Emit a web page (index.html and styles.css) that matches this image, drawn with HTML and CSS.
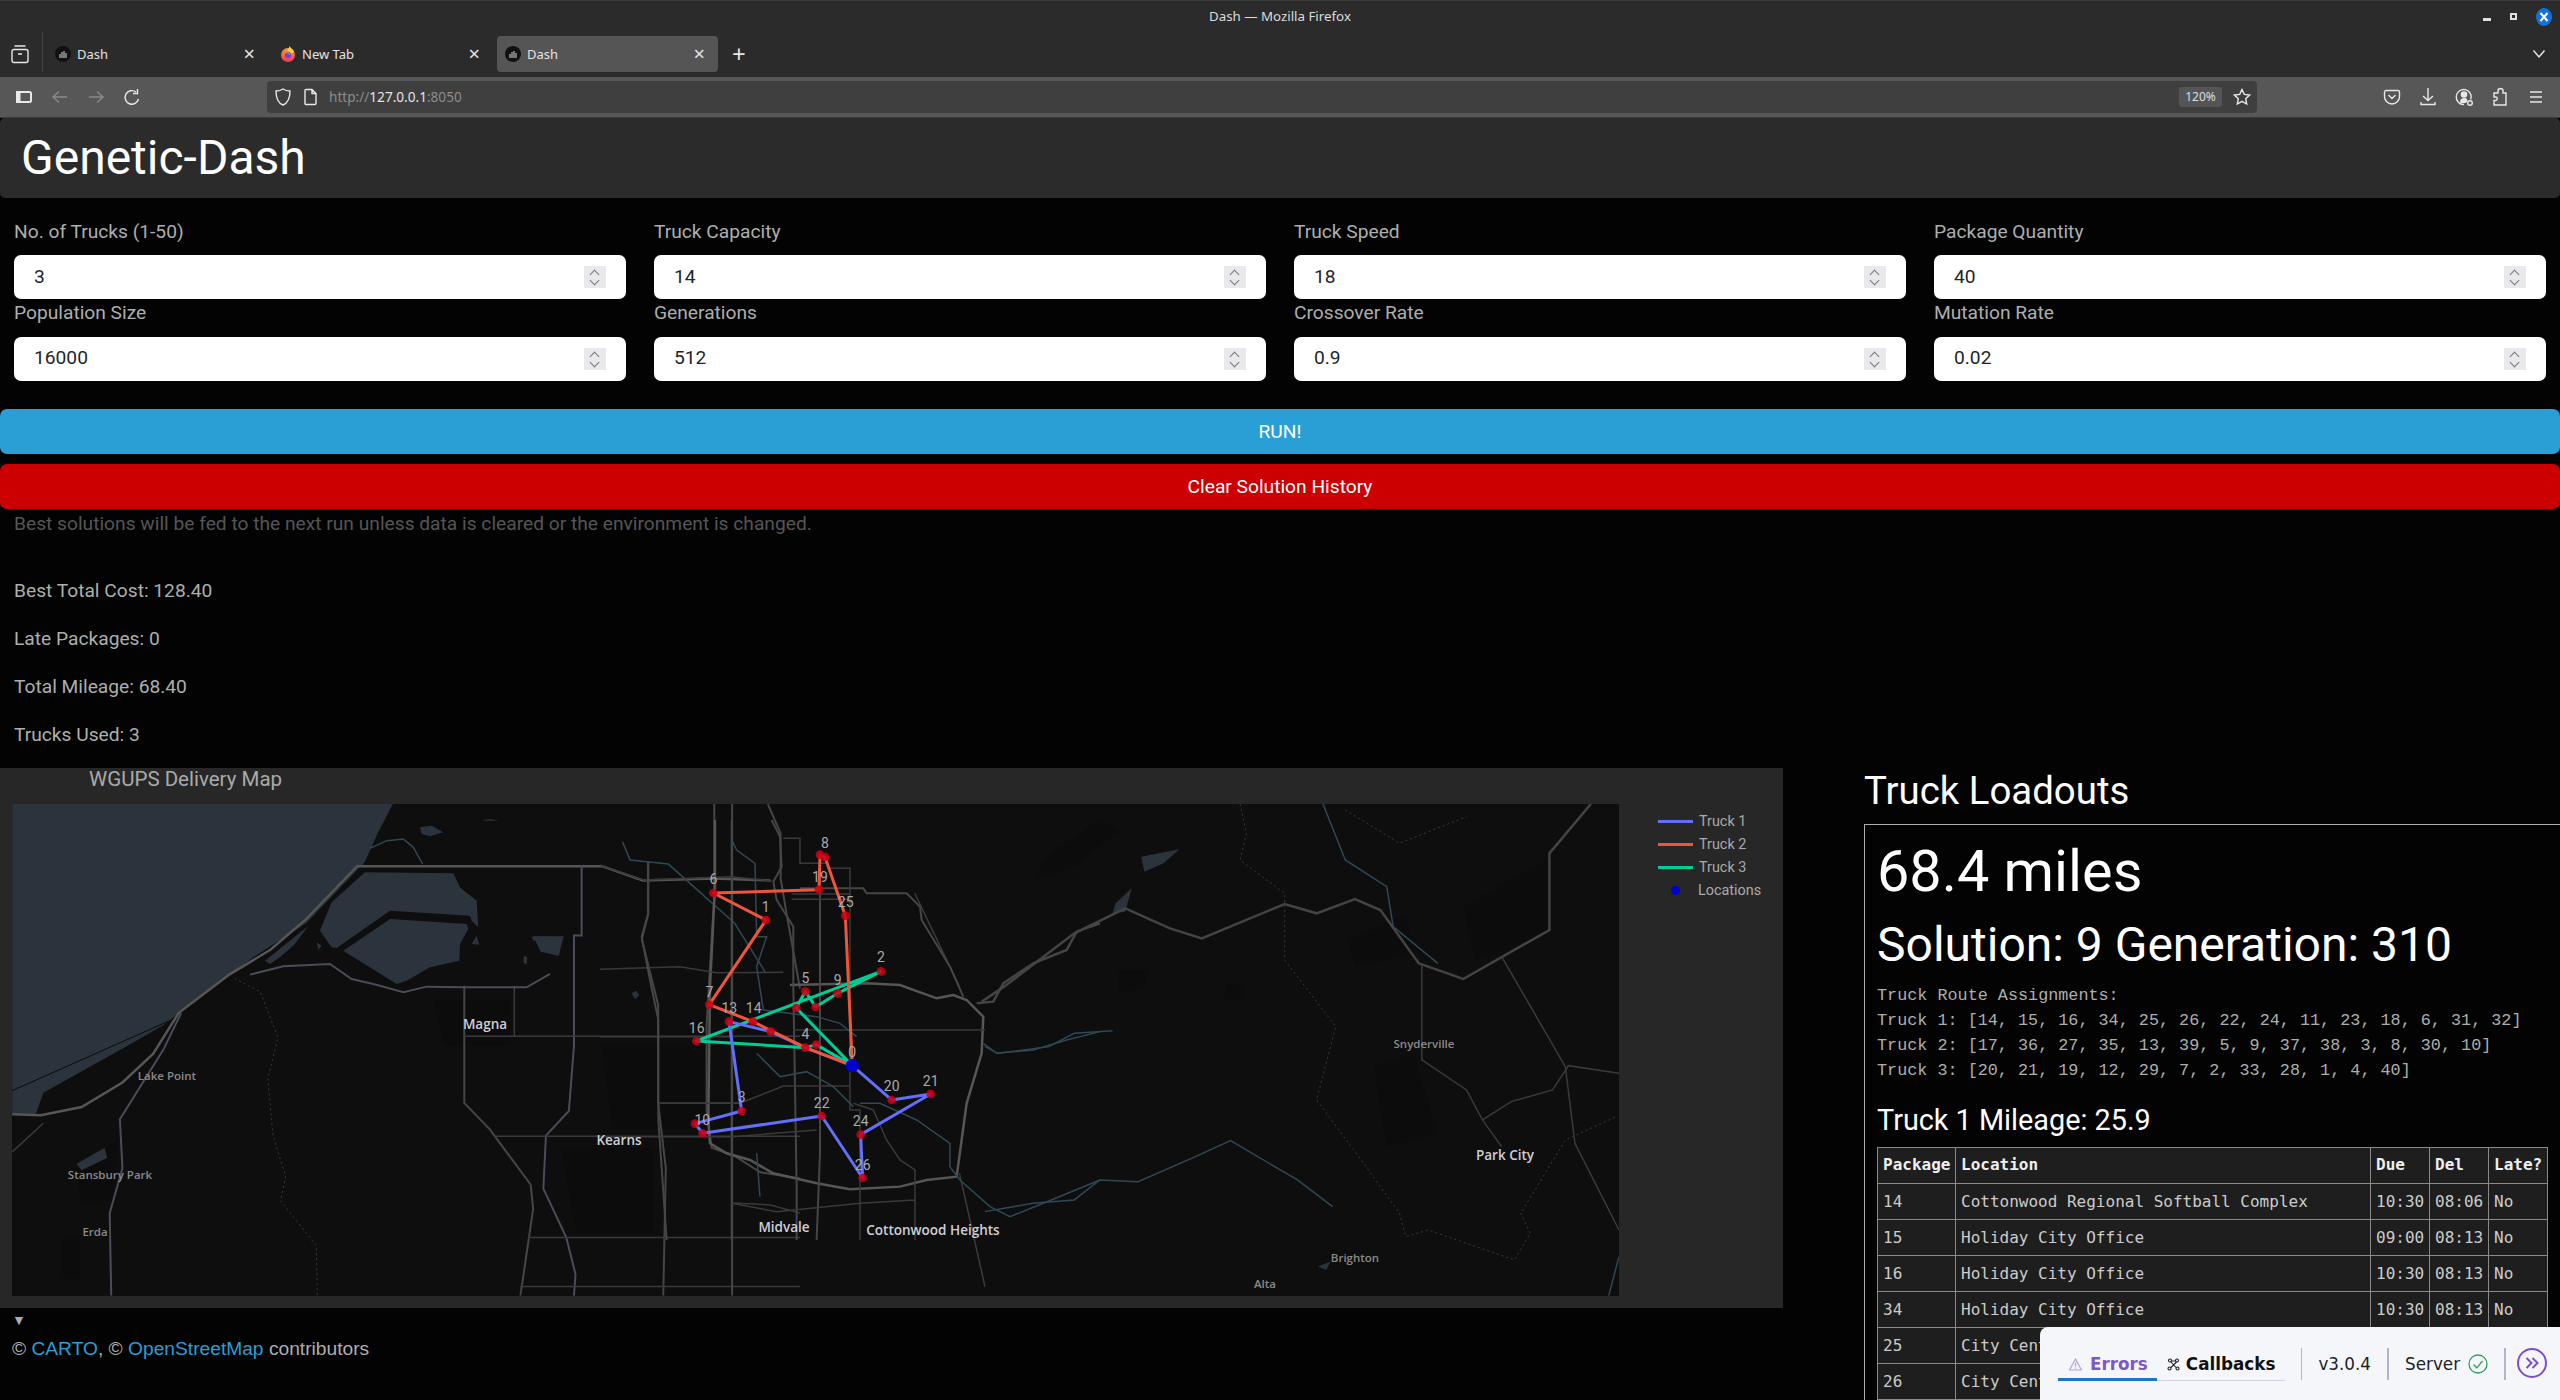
FILE: index.html
```html
<!DOCTYPE html>
<html>

<head>
    <meta charset="UTF-8">
    <title>Dash</title>
    <link rel="stylesheet" href="styles.css">
</head>

<body>
    <div class="titlebar">
        <span></span>
        <span class="titlebar-text">Dash — Mozilla Firefox</span>
        <div class="window-controls">
            <span class="win-min"></span>
            <span class="win-max"></span>
            <span class="win-close">
                <svg width="10" height="10" viewBox="0 0 10 10"><path d="M1.500 1 8.500 9M8.500 1 1.500 9" stroke="#fff" stroke-width="2" fill="none" /></svg>
            </span>
        </div>
    </div>

    <div class="tabstrip">
        <div class="tabs-button">
            <svg width="18" height="20" viewBox="0 0 18 20" class="ico"><path d="M3.500 2h11M3 5.500h12a2 2 0 0 1 2 2v9a2 2 0 0 1-2 2H3a2 2 0 0 1-2-2v-9a2 2 0 0 1 2-2ZM7 10h4" /></svg>
        </div>
        <div class="tab">
            <svg class="favicon" viewBox="0 0 16 16"><circle cx="8" cy="8" r="8" fill="#111" /><path d="M5 8v4M7 6v6M9 5v7M11 7v5" stroke="#bbb" stroke-width="1.200" /></svg>
            <span class="tab-label">Dash</span>
            <span class="tab-close">×</span>
        </div>
        <div class="tab">
            <svg class="favicon" viewBox="0 0 16 16">
                <defs><linearGradient id="fox" x1="0" y1="0" x2="0" y2="1"><stop offset="0" stop-color="#ff9a1f" /><stop offset="1" stop-color="#f0356b" /></linearGradient></defs>
                <circle cx="8" cy="9" r="7" fill="url(#fox)" /><path d="M7 5C8 4 9 2 9.500 0c.5 2 4 3 4.500 6L11 8C10 6 9 5 7 5Z" fill="#ffd23f" /><circle cx="8" cy="9" r="3" fill="#6a3fd8" /><path d="M5 7c2-1 4 0 5 2" stroke="#ff9a1f" fill="none" />
            </svg>
            <span class="tab-label">New Tab</span>
            <span class="tab-close">×</span>
        </div>
        <div class="tab tab-active">
            <svg class="favicon" viewBox="0 0 16 16"><circle cx="8" cy="8" r="8" fill="#111" /><path d="M5 8v4M7 6v6M9 5v7M11 7v5" stroke="#bbb" stroke-width="1.200" /></svg>
            <span class="tab-label">Dash</span>
            <span class="tab-close">×</span>
        </div>
        <span class="tab-new">+</span>
        <span class="tab-list">
            <svg width="14" height="10" viewBox="0 0 14 10" class="ico"><path d="M1.500 1.500 7 8l5.500-6.500" /></svg>
        </span>
    </div>

    <div class="toolbar">
        <div class="nav-buttons">
            <svg width="18" height="18" viewBox="0 0 18 18" class="ico-bold"><rect x="2" y="4" width="14" height="10" rx="1.500" /><rect x="2" y="4" width="2.500" height="10" fill="#e8e8e8" /></svg>
            <svg width="18" height="18" viewBox="0 0 18 18" class="ico ico-dim"><path d="M16 9H2M8 3.500 2 9l6 5.500" /></svg>
            <svg width="18" height="18" viewBox="0 0 18 18" class="ico ico-dim"><path d="M2 9h14M10 3.500 16 9l-6 5.500" /></svg>
            <svg width="18" height="18" viewBox="0 0 18 18" class="ico"><path d="M15.500 11A6.800 6.800 0 1 1 13 4M14.500 1v4.500H10" /></svg>
        </div>
        <div class="urlbar">
            <svg width="18" height="20" viewBox="0 0 18 20" class="ico"><path d="M9 2c2 1.500 4 2 7 2 0 7-2 12-7 14C4 16 2 11 2 4c3 0 5-.5 7-2Z" /></svg>
            <svg width="16" height="20" viewBox="0 0 16 20" class="ico"><path d="M3 2.500h6l4 4v10a1 1 0 0 1-1 1H3a1 1 0 0 1-1-1v-13a1 1 0 0 1 1-1ZM9 2.500v4h4" /></svg>
            <span class="url-text">http://<b>127.0.0.1</b>:8050</span>
            <span class="url-zoom">120%</span>
            <svg width="18" height="18" viewBox="0 0 18 18" class="ico"><path d="m9 1.500 2.300 4.900 5.200.7-3.800 3.600 1 5.300L9 13.400 4.300 16l1-5.300L1.500 7.100l5.200-.7Z" /></svg>
        </div>
        <div class="toolbar-right">
            <svg width="18" height="18" viewBox="0 0 18 18" class="ico"><path d="M3 2.500h12a1.500 1.500 0 0 1 1.500 1.500v4.500a7.500 7.500 0 0 1-15 0V4A1.500 1.500 0 0 1 3 2.500ZM5.500 7 9 10.500 12.500 7" /></svg>
            <svg width="18" height="20" viewBox="0 0 18 20" class="ico"><path d="M9 1v12.500M4 9 9 13.500 14 9M2 15v2.500h14V15" /></svg>
            <svg width="18" height="20" viewBox="0 0 18 20" class="ico"><path d="M15.800 12.500A7.500 7.500 0 1 0 9 17.500" /><circle cx="9" cy="7.500" r="2.600" fill="#e8e8e8" /><path d="M5 15c0-3 2-4 4-4s3 .5 3.500 2.500L11 16H6Z" fill="#e8e8e8" stroke="none" /><circle cx="15" cy="16" r="2.300" /></svg>
            <svg width="18" height="20" viewBox="0 0 18 20" class="ico"><path d="M7 6V4a2.500 2.500 0 0 1 5 0v2h3v12H3v-4.500h1.500a1.700 1.700 0 0 0 0-3.500H3V6Z" /></svg>
            <svg width="18" height="18" viewBox="0 0 18 18" class="ico"><path d="M3 4h12M3 9h12M3 14h12" /></svg>
        </div>
    </div>

    <header class="app-header">
        <h1>Genetic-Dash</h1>
    </header>

    <main>
        <form class="params">
            <div class="param"><label>No. of Trucks (1-50)</label><div class="num-input"><span>3</span><i class="spinner"></i></div></div>
            <div class="param"><label>Truck Capacity</label><div class="num-input"><span>14</span><i class="spinner"></i></div></div>
            <div class="param"><label>Truck Speed</label><div class="num-input"><span>18</span><i class="spinner"></i></div></div>
            <div class="param"><label>Package Quantity</label><div class="num-input"><span>40</span><i class="spinner"></i></div></div>
            <div class="param"><label>Population Size</label><div class="num-input"><span>16000</span><i class="spinner"></i></div></div>
            <div class="param"><label>Generations</label><div class="num-input"><span>512</span><i class="spinner"></i></div></div>
            <div class="param"><label>Crossover Rate</label><div class="num-input"><span>0.9</span><i class="spinner"></i></div></div>
            <div class="param"><label>Mutation Rate</label><div class="num-input"><span>0.02</span><i class="spinner"></i></div></div>
        </form>

        <button class="btn btn-run" type="button">RUN!</button>
        <button class="btn btn-clear" type="button">Clear Solution History</button>
        <p class="note">Best solutions will be fed to the next run unless data is cleared or the environment is changed.</p>

        <div class="stats">
            <p>Best Total Cost: 128.40</p>
            <p>Late Packages: 0</p>
            <p>Total Mileage: 68.40</p>
            <p>Trucks Used: 3</p>
        </div>

        <div class="results">
            <section class="map-col">
                <div class="map-figure">
                    <div class="map-title">WGUPS Delivery Map</div>
                    <div class="map-body">
                        <svg class="map" width="1607" height="492" viewBox="12 804 1607 492">
                            <rect x="12" y="804" width="1607" height="492" fill="#0e0e0f" />

                            <!-- west side, coords read from left crop -->
                            <g transform="translate(0,760) scale(.5102,.4082)">
                                <path class="blotch" d="M850 590H1000V700H870ZM1180 700H1380V900H1200ZM120 1170H155V1270H120ZM150 1000 230 930 220 1080 160 1090ZM1100 950H1280V1160H1130Z" />
                                <path class="water" d="M24 108H770L740 180 715 250 600 400 500 480 360 610 320 650 250 700 85 815 70 868H24Z" />
                                <path class="line-dark" d="M24 810 330 640" />
                                <path class="road-major" d="M24 868 80 870 160 850 240 790 300 720 350 620 450 525 530 465 600 390 700 260H1180L1260 295 1400 290 1510 295" />
                                <path class="road-blue" d="M1140 258V430H1125V700L1115 860 1070 920 1065 1050 1110 1170 1128 1260 1125 1312" />
                                <path class="road-blue" d="M355 620 320 710 235 880 240 1000 215 1110 218 1312" />
                                <path class="road" d="M1270 250V380L1258 440 1290 600V840L1305 1000 1300 1312" />
                                <path class="road" d="M910 553V840L960 905 1040 1040 1045 1100 1020 1312" />
                                <path class="road-thin" d="M1008 553V677M910 677H1568M970 922H1568M24 960 85 890M1035 1170H1568M1020 1290H1568M1290 840H1450M1435 1085 1510 1090 1568 1110" />
                                <path class="road" d="M1400 108V330L1385 650V860L1395 950 1440 970 1490 1010 1568 1025M1435 108V1312M1505 108 1530 180V290L1545 400 1568 560" />
                                <path class="river" d="M1220 200 1235 245 1310 255 1440 400 1500 520" />
                                <path class="trail" d="M460 535 510 568 545 680 525 780 535 920 560 1020 550 1080 620 1190 622 1312" />
                                <path class="water" d="M1045 432H1105L1095 480 1060 470Z" />
                                <path class="water" d="M150 990 205 950 210 975 160 1005Z" />
                            </g>

                            <!-- salt ponds by the lake, from closer crop -->
                            <g transform="translate(250,804) scale(.3333)">
                                <path class="water" d="M345 205 610 208 630 250 680 290 685 370 665 350 660 335 420 320 260 432 245 430 210 380 245 295Z" />
                                <path class="water" d="M420 345 650 360 655 375 630 420 628 470 540 490 470 530 440 540 280 440Z" />
                                <path class="water" d="M200 415 215 425 205 438ZM665 420 680 395 688 422ZM45 470 120 410 175 365 135 420 90 460 60 480ZM510 70 545 65 580 85 540 97 515 90ZM845 398H900V410H850ZM822 455 832 460 830 482 820 475ZM695 50 745 50 720 45Z" />
                                <path class="river" d="M360 133 410 110 460 105 490 130 518 180" />
                                <path class="road-blue" d="M0 512 100 487 240 480 305 525 370 540 460 565 530 548 640 550H830L900 510" />
                            </g>

                            <!-- east side -->
                            <g transform="translate(800,800) scale(.6378,.3333)">
                                <path class="blotch" d="M380 180 470 60 500 90 430 200 370 240ZM500 510 545 510 540 560 500 580ZM670 550H695V600H665ZM900 800 960 760 1000 1000 920 1040ZM1040 320 1170 180 1170 400 1060 480ZM860 420 950 350 960 460 870 500Z" />
                                <path class="water" d="M535 170 595 148 570 190 540 215ZM495 310 520 265 510 335 490 340ZM812 1400 832 1385 825 1410Z" />
                                <path class="river" d="M820 12 830 60 855 180 920 260 930 380 1000 490M290 1235 365 1210 430 1200 470 1140 530 1145 620 1070 675 1022 780 1140 835 1220M290 740 310 760 390 740 430 700 490 692M1268 1487 1284 1370" />
                                <path class="road-east" d="M285 605 320 560 430 400 510 325 580 385 630 415 760 312 810 340 870 297 910 330 970 490 1040 537 1175 390V160L1240 12" />
                                <path class="road-thin" d="M975 495V780L1045 870 1070 960 1100 1040M1100 470 1200 800 1215 1030 1284 1290" />
                                <path class="road-thin" d="M1070 960 1115 905 1180 870 1205 797 1284 820" />
                                <path class="road-thin" d="M250 1120 290 1460M180 280 250 560" />
                                <path class="trail" d="M690 12 700 100 690 180 760 280V480L840 680 810 900 880 1080 940 1240 950 1310 985 1290 1120 1380 1145 1300 1130 1240 1200 1020 1280 950M855 30 940 130 1045 50" />
                            </g>

                            <!-- valley, roads and the truck routes -->
                            <g transform="translate(600,820) scale(.3333)">
                                <path class="road-major" d="M345 0V200L330 500 325 900 330 970 380 1000 450 1020 520 1060 650 1090 750 1108 900 1100 980 1080 1070 1070 1100 850 1145 700 1150 590 1100 540 1060 525 1010 535 900 495 800 490 570 495" />
                                <path class="road" d="M395 0V1260M515 0 540 50 545 140 520 185 530 240 580 320V500L585 800 590 1100V1260M660 130V1000L650 1260M600 205H790L800 220H920L960 260 965 300 1050 440 1090 530" />
                                <path class="road-thin" d="M550 55H600V130H680M690 145H750V870H780V1260M575 222H750M575 238H750M0 135 130 180 390 170 515 182M0 448 240 440 350 458 550 457M0 650H400M580 630H1155M175 850H420L550 798H750M0 950H400L650 930M395 1150 530 1175 780 1150 945 1140M760 850 820 870 860 960 900 1020 945 1050V1260" />
                                <path class="road" d="M145 125V280L125 350 150 480 175 600V900L200 1260" />
                                <path class="road-east" d="M1500 310 1430 335 1400 390 1300 430 1210 490 1180 545 1130 550" />
                                <path class="river" d="M1150 670 1190 700 1300 690 1400 660 1500 635M780 850 840 850 950 900 1050 970V1040L1080 1080 1170 1160 1230 1190 1330 1150 1500 1080M540 770 620 755 700 800 760 860M395 60 410 90 465 130 470 350 500 350 470 440 490 570 650 590 720 610 770 650M470 700 540 770M470 1000 480 1130" />
                                <path class="water" d="M95 520 108 512 118 525 105 538Z" />

                                <path class="route route-green" d="M757 737 589 564 616 514 647 561 713 520 843 454 289 663 616 683 649 674 757 737" />
                                <path class="route route-blue" d="M757 737 875 840 992 822 782 944 788 1074 665 888 308 940 285 911 425 873 387 605 512 635 616 683 757 737" />
                                <path class="route route-red" d="M757 737 736 287 675 111 660 104 657 209 340 219 498 300 328 554 459 605 616 683 757 737" />

                                <g class="nodes">
                                    <circle cx="660" cy="104" r="13" /><circle cx="675" cy="111" r="13" /><circle cx="657" cy="209" r="13" />
                                    <circle cx="736" cy="287" r="13" /><circle cx="340" cy="219" r="13" /><circle cx="498" cy="300" r="13" />
                                    <circle cx="843" cy="454" r="13" /><circle cx="616" cy="514" r="13" /><circle cx="713" cy="520" r="13" />
                                    <circle cx="647" cy="561" r="13" /><circle cx="589" cy="564" r="13" /><circle cx="328" cy="554" r="13" />
                                    <circle cx="387" cy="605" r="13" /><circle cx="459" cy="605" r="13" /><circle cx="512" cy="635" r="13" />
                                    <circle cx="289" cy="663" r="13" /><circle cx="616" cy="683" r="13" /><circle cx="649" cy="674" r="13" />
                                    <circle cx="875" cy="840" r="13" /><circle cx="992" cy="822" r="13" /><circle cx="425" cy="873" r="13" />
                                    <circle cx="665" cy="888" r="13" /><circle cx="285" cy="911" r="13" /><circle cx="308" cy="940" r="13" />
                                    <circle cx="782" cy="944" r="13" /><circle cx="788" cy="1074" r="13" />
                                </g>
                                <circle class="depot" cx="757" cy="737" r="20" />

                                <g class="node-labels">
                                    <text x="675" y="70">8</text><text x="660" y="170">19</text><text x="737" y="247">25</text>
                                    <text x="340" y="178">6</text><text x="497" y="262">1</text><text x="843" y="412">2</text>
                                    <text x="616" y="475">5</text><text x="713" y="480">9</text><text x="328" y="515">7</text>
                                    <text x="388" y="563">13</text><text x="461" y="565">14</text><text x="290" y="623">16</text>
                                    <text x="616" y="642">4</text><text x="757" y="697">0</text><text x="875" y="798">20</text>
                                    <text x="992" y="782">21</text><text x="425" y="832">3</text><text x="665" y="848">22</text>
                                    <text x="307" y="900">10</text><text x="782" y="904">24</text><text x="788" y="1035">26</text>
                                </g>
                            </g>

                            <g class="place-labels">
                                <text x="485" y="1024">Magna</text>
                                <text class="minor" x="167" y="1075">Lake Point</text>
                                <text class="minor" x="110" y="1174">Stansbury Park</text>
                                <text class="minor" x="95" y="1231">Erda</text>
                                <text x="619" y="1140">Kearns</text>
                                <text x="784" y="1227">Midvale</text>
                                <text x="933" y="1230">Cottonwood Heights</text>
                                <text class="minor" x="1424" y="1043">Snyderville</text>
                                <text x="1505" y="1155">Park City</text>
                                <text class="minor" x="1355" y="1257">Brighton</text>
                                <text class="minor" x="1265" y="1283">Alta</text>
                            </g>
                        </svg>
                        <ul class="legend">
                            <li><i class="swatch swatch-blue"></i>Truck 1</li>
                            <li><i class="swatch swatch-red"></i>Truck 2</li>
                            <li><i class="swatch swatch-green"></i>Truck 3</li>
                            <li><i class="swatch-dot"></i>Locations</li>
                        </ul>
                    </div>
                </div>
                <div class="attribution-toggle">▼</div>
                <div class="attribution">© <a>CARTO</a>, © <a>OpenStreetMap</a> contributors</div>
            </section>

            <section class="loadouts">
                <h2>Truck Loadouts</h2>
                <div class="loadouts-box">
                    <h1>68.4 miles</h1>
                    <h2 class="solution">Solution: 9 Generation: 310</h2>
                    <pre>Truck Route Assignments:
Truck 1: [14, 15, 16, 34, 25, 26, 22, 24, 11, 23, 18, 6, 31, 32]
Truck 2: [17, 36, 27, 35, 13, 39, 5, 9, 37, 38, 3, 8, 30, 10]
Truck 3: [20, 21, 19, 12, 29, 7, 2, 33, 28, 1, 4, 40]</pre>
                    <h4>Truck 1 Mileage: 25.9</h4>
                    <table>
                        <colgroup><col class="c-pkg"><col class="c-loc"><col class="c-due"><col class="c-del"><col class="c-late"></colgroup>
                        <tr><th>Package</th><th>Location</th><th>Due</th><th>Del</th><th>Late?</th></tr>
                        <tr><td>14</td><td>Cottonwood Regional Softball Complex</td><td>10:30</td><td>08:06</td><td>No</td></tr>
                        <tr><td>15</td><td>Holiday City Office</td><td>09:00</td><td>08:13</td><td>No</td></tr>
                        <tr><td>16</td><td>Holiday City Office</td><td>10:30</td><td>08:13</td><td>No</td></tr>
                        <tr><td>34</td><td>Holiday City Office</td><td>10:30</td><td>08:13</td><td>No</td></tr>
                        <tr><td>25</td><td>City Center</td><td></td><td></td><td></td></tr>
                        <tr><td>26</td><td>City Center</td><td></td><td></td><td></td></tr>
                    </table>
                </div>
            </section>
        </div>
    </main>

    <div class="debug-panel">
        <div class="debug-tabs">
            <span class="debug-tab debug-tab-active">
                <svg width="13" height="13" viewBox="0 0 13 13" fill="none" stroke="#b79fe3" stroke-width="1.200"><path d="M6.500 1 12.500 12H.5ZM6.500 4.500v4M6.500 9.500v1.200" /></svg>
                Errors
            </span>
            <span class="debug-tab">
                <svg width="13" height="13" viewBox="0 0 13 13" fill="none" stroke="#222" stroke-width="1.100"><circle cx="3" cy="2.500" r="1.500" /><circle cx="10" cy="2.500" r="1.500" /><circle cx="2.500" cy="10.500" r="1.500" /><circle cx="10.500" cy="10.500" r="1.500" /><path d="M4.500 3h4M4 4l5 5.500M9.500 4 4 9.500" /></svg>
                Callbacks
            </span>
        </div>
        <span class="debug-item debug-version">v3.0.4</span>
        <span class="debug-item debug-server">Server
            <svg width="20" height="20" viewBox="0 0 20 20" fill="none" stroke="#2f9e5a" stroke-width="1.300"><circle cx="10" cy="10" r="9" /><path d="M5.500 10.500 8.800 13.800 14.500 7" /></svg>
        </span>
        <span class="debug-toggle">
            <svg width="30" height="30" viewBox="0 0 30 30" fill="none" stroke="#7a4fc9" stroke-width="2"><circle cx="15" cy="15" r="14" /><path d="M9.500 10 14.500 15 9.500 20M15.500 10 20.500 15 15.500 20" /></svg>
        </span>
    </div>
</body>

</html>
```

FILE: styles.css
```css
* {
    box-sizing: border-box;
}

html,
body {
    height: 1400px;
    overflow: hidden;
}

body {
    margin: 0;
    background-color: #030303;
    color: #adafae;
    font-family: Roboto, sans-serif;
    font-size: 19.2px;
    line-height: 28.8px;
}

h1,
h2,
h4,
p,
pre {
    margin: 0;
    font-weight: 400;
}

/* browser chrome */
.titlebar {
    height: 36px;
    padding-bottom: 4px;
    display: grid;
    grid-template-columns: 1fr auto 1fr;
    align-items: center;
    background-color: #2b2b2b;
    border-top: 1px solid #3a3a3a;
    color: #dcdcdc;
    font-family: "Noto Sans", sans-serif;
    font-size: 13.3px;
}

.window-controls {
    display: flex;
    justify-content: flex-end;
    align-items: center;
    gap: 19px;
    padding-right: 8px;
}

.win-min {
    width: 8px;
    height: 3px;
    margin-top: 6px;
    background-color: #e0e0e0;
}

.win-max {
    width: 7px;
    height: 7px;
    border: 2px solid #e0e0e0;
}

.win-close {
    width: 16px;
    height: 18px;
    display: flex;
    align-items: center;
    justify-content: center;
    border-radius: 50%;
    background-color: #1272d8;
}

.tabstrip {
    height: 41px;
    display: flex;
    align-items: flex-start;
    background-color: #2b2b2b;
    color: #e4e4e4;
    font-family: "Noto Sans", sans-serif;
    font-size: 13px;
}

.tabs-button {
    width: 43px;
    height: 40px;
    margin-top: -4px;
    padding: 12px 0 0 11px;
    border-right: 1px solid #444;
}

.tab {
    width: 221px;
    height: 36px;
    margin-left: 4px;
    padding: 0 8px;
    display: flex;
    align-items: center;
    border-radius: 4px;
}

.tab-active {
    background-color: #555;
}

.favicon {
    width: 16px;
    height: 16px;
    margin-right: 6px;
}

.tab-label {
    flex: 1;
}

.tab-close {
    font-size: 20px;
    margin-right: 5px;
}

.tab-new {
    margin-left: 14px;
    font-size: 24px;
    line-height: 36px;
}

.tab-list {
    margin-left: auto;
    padding: 13px 14px 0 0;
    line-height: 10px;
}

.ico {
    fill: none;
    stroke: #e8e8e8;
    stroke-width: 1.4;
}

.ico-dim {
    stroke: #8a8a8a;
}

.ico-bold {
    fill: none;
    stroke: #e8e8e8;
    stroke-width: 2;
}

.toolbar {
    height: 41px;
    display: flex;
    align-items: center;
    background-color: #575757;
    border-bottom: 1px solid #3a3a3a;
}

.nav-buttons {
    width: 267px;
    padding-left: 15px;
    display: flex;
    gap: 18px;
}

.urlbar {
    width: 1990px;
    height: 32px;
    padding: 0 6px 0 7px;
    display: flex;
    align-items: center;
    background-color: #3f3f3f;
    border-radius: 4px;
    font-family: "Noto Sans", sans-serif;
    font-size: 13.6px;
    line-height: 20px;
}

.urlbar .ico:nth-child(2) {
    margin-left: 11px;
}

.url-text {
    margin-left: 10px;
    flex: 1;
    color: #8c8c8c;
}

.url-text b {
    color: #e4e4e4;
    font-weight: 400;
}

.url-zoom {
    width: 43px;
    height: 20px;
    margin-right: 11px;
    text-align: center;
    border-radius: 3px;
    background-color: #555;
    color: #ddd;
    font-size: 12px;
}

.toolbar-right {
    margin-left: 126px;
    display: flex;
    align-items: center;
    gap: 18px;
}

/* page */
.app-header {
    height: 80px;
    padding: 0 21px;
    display: flex;
    align-items: center;
    background-color: #2b2b2b;
    border-radius: 5px;
}

.app-header h1 {
    color: #fff;
    font-size: 48px;
    line-height: 57.6px;
}

.params {
    margin-top: 20px;
    padding: 0 14px;
    display: grid;
    grid-template-columns: repeat(4, 1fr);
    column-gap: 28px;
}

.param label {
    display: block;
    margin-bottom: 8.5px;
}

.num-input {
    height: 44px;
    padding: 0 20px;
    display: flex;
    align-items: center;
    justify-content: space-between;
    background-color: #fff;
    border-radius: 7px;
    color: #212529;
}

.spinner {
    width: 22px;
    height: 22px;
    background-color: #e9e9ed;
    position: relative;
}

.spinner::before,
.spinner::after {
    content: "";
    position: absolute;
    left: 7px;
    width: 6px;
    height: 6px;
    border-left: 1px solid #777;
    border-top: 1px solid #777;
    transform: rotate(45deg);
}

.spinner::before {
    top: 5px;
}

.spinner::after {
    top: 11px;
    transform: rotate(225deg);
}

.btn {
    display: block;
    width: 100%;
    height: 45px;
    border: none;
    border-radius: 7px;
    color: #fff;
    font-family: Roboto, sans-serif;
    font-size: 19.2px;
}

.btn-run {
    margin-top: 28.4px;
    background-color: #2a9fd6;
}

.btn-clear {
    margin-top: 10px;
    background-color: #cc0000;
}

.note {
    padding: 1px 0 0 14px;
    color: #555;
}

.stats {
    margin-top: 38px;
    padding-left: 14px;
}

.stats p {
    margin-bottom: 19.2px;
}

.stats p:last-child {
    margin-bottom: 18.6px;
}

.results {
    display: grid;
    grid-template-columns: 1783px 1fr;
    column-gap: 81px;
}

/* map */
.map-figure {
    height: 540px;
    background-color: #272727;
}

.map-title {
    height: 36px;
    padding-left: 89px;
    color: #aaa;
    font-size: 20.5px;
    line-height: 22px;
}

.map-body {
    display: flex;
    padding-left: 12px;
}

.map path {
    fill: none;
    vector-effect: non-scaling-stroke;
}

.map .water {
    fill: #2b343d;
}

.map .blotch {
    fill: #0c0c0d;
}

.line-dark {
    stroke: #0b0b0b;
    stroke-width: 1;
}

.road-major {
    stroke: #565654;
    stroke-width: 2.5;
}

.road-east {
    stroke: #444;
    stroke-width: 2.5;
}

.road {
    stroke: #464648;
    stroke-width: 2;
}

.road-blue {
    stroke: #4a4c58;
    stroke-width: 2;
}

.road-thin {
    stroke: #3a3a3c;
    stroke-width: 1.5;
}

.river {
    stroke: #2f4856;
    stroke-width: 1.5;
}

.trail {
    stroke: #3a3a3a;
    stroke-width: 1;
    stroke-dasharray: 2 3;
}

.route {
    stroke-width: 3;
    stroke-linejoin: round;
}

.route-blue {
    stroke: #636efa;
}

.route-red {
    stroke: #ef553b;
}

.route-green {
    stroke: #00cc96;
}

.nodes {
    fill: #cc0014;
    opacity: 0.85;
}

.depot {
    fill: #0000cc;
}

.node-labels {
    fill: #aaa;
    font-size: 42px;
    text-anchor: middle;
    dominant-baseline: central;
}

.place-labels {
    fill: #cfcfd6;
    font-family: "Open Sans", sans-serif;
    font-size: 13.5px;
    font-weight: 600;
    text-anchor: middle;
    dominant-baseline: central;
}

.place-labels .minor {
    fill: #8a8a8a;
    font-size: 11.5px;
}

.legend {
    margin: 6px 0 0 39px;
    padding: 0;
    list-style: none;
    font-size: 14.4px;
    line-height: 23px;
    color: #aaa;
}

.legend li {
    display: flex;
    align-items: center;
}

.swatch {
    width: 35px;
    height: 3px;
    margin-right: 6px;
}

.swatch-blue {
    background-color: #636efa;
}

.swatch-red {
    background-color: #ef553b;
}

.swatch-green {
    background-color: #00cc96;
}

.swatch-dot {
    width: 9px;
    height: 9px;
    margin: 0 18px 0 13px;
    border-radius: 50%;
    background-color: #0000cc;
}

.attribution-toggle {
    padding-left: 12px;
    height: 24px;
    font-size: 14px;
    line-height: 24px;
}

.attribution {
    padding-left: 12px;
    margin-top: 3px;
    font-family: "Liberation Sans", sans-serif;
}

.attribution a {
    color: #2a9fd6;
}

/* right column */
.loadouts h2 {
    color: #fff;
    font-size: 38.4px;
    line-height: 46.08px;
    margin-bottom: 9.6px;
}

.loadouts-box {
    border: 1px solid #adafae;
    border-right: none;
    padding: 12px 0 0 12px;
    height: 600px;
}

.loadouts-box h1 {
    color: #fff;
    font-size: 57.6px;
    line-height: 69.12px;
    margin-bottom: 9.6px;
}

.loadouts-box .solution {
    font-size: 48px;
    line-height: 57.6px;
}

.loadouts-box pre {
    font-family: "Liberation Mono", monospace;
    font-size: 16.8px;
    line-height: 25.2px;
    margin-bottom: 19.2px;
}

.loadouts-box h4 {
    color: #fff;
    font-size: 28.8px;
    line-height: 34.56px;
    margin-bottom: 9.6px;
}

table {
    width: 670px;
    table-layout: fixed;
    border-collapse: collapse;
    background-color: #1e1e1e;
    font-family: "DejaVu Sans Mono", monospace;
    font-size: 16px;
    line-height: 20px;
    color: #ccc;
}

th,
td {
    height: 36px;
    padding: 0 5px;
    border: 1px solid #8a8a8a;
    text-align: left;
    white-space: nowrap;
}

td {
    padding-top: 2px;
}

th {
    color: #eee;
    font-weight: 700;
}

.c-pkg {
    width: 78px;
}

.c-loc {
    width: 415px;
}

.c-due,
.c-del,
.c-late {
    width: 59px;
}

/* dash dev tools */
.debug-panel {
    position: fixed;
    right: 0;
    bottom: 0;
    width: 520px;
    height: 73px;
    padding: 1px 0 0 18px;
    display: flex;
    align-items: center;
    background-color: #f5f6fa;
    border-top-left-radius: 8px;
    color: #222;
    font-family: "DejaVu Sans", sans-serif;
    font-size: 16.8px;
}

.debug-tabs {
    display: flex;
    height: 33px;
    border-bottom: 1px solid #d0d4e4;
    margin-right: 16px;
}

.debug-tab {
    display: flex;
    align-items: center;
    gap: 6px;
    padding: 0 10px;
    height: 33px;
    color: #111;
    font-weight: 700;
}

.debug-tab-active {
    color: #7f56c4;
    border-bottom: 3px solid #1975c5;
    padding: 3px 9px 0 11px;
    gap: 8px;
}

.debug-item {
    height: 32px;
    padding: 0 16px;
    display: flex;
    align-items: center;
    gap: 8px;
    border-left: 2px solid #b0b5cc;
}

.debug-version {
    border-left-width: 1px;
}

.debug-toggle {
    height: 32px;
    padding-left: 11px;
    border-left: 2px solid #b0b5cc;
}
```
